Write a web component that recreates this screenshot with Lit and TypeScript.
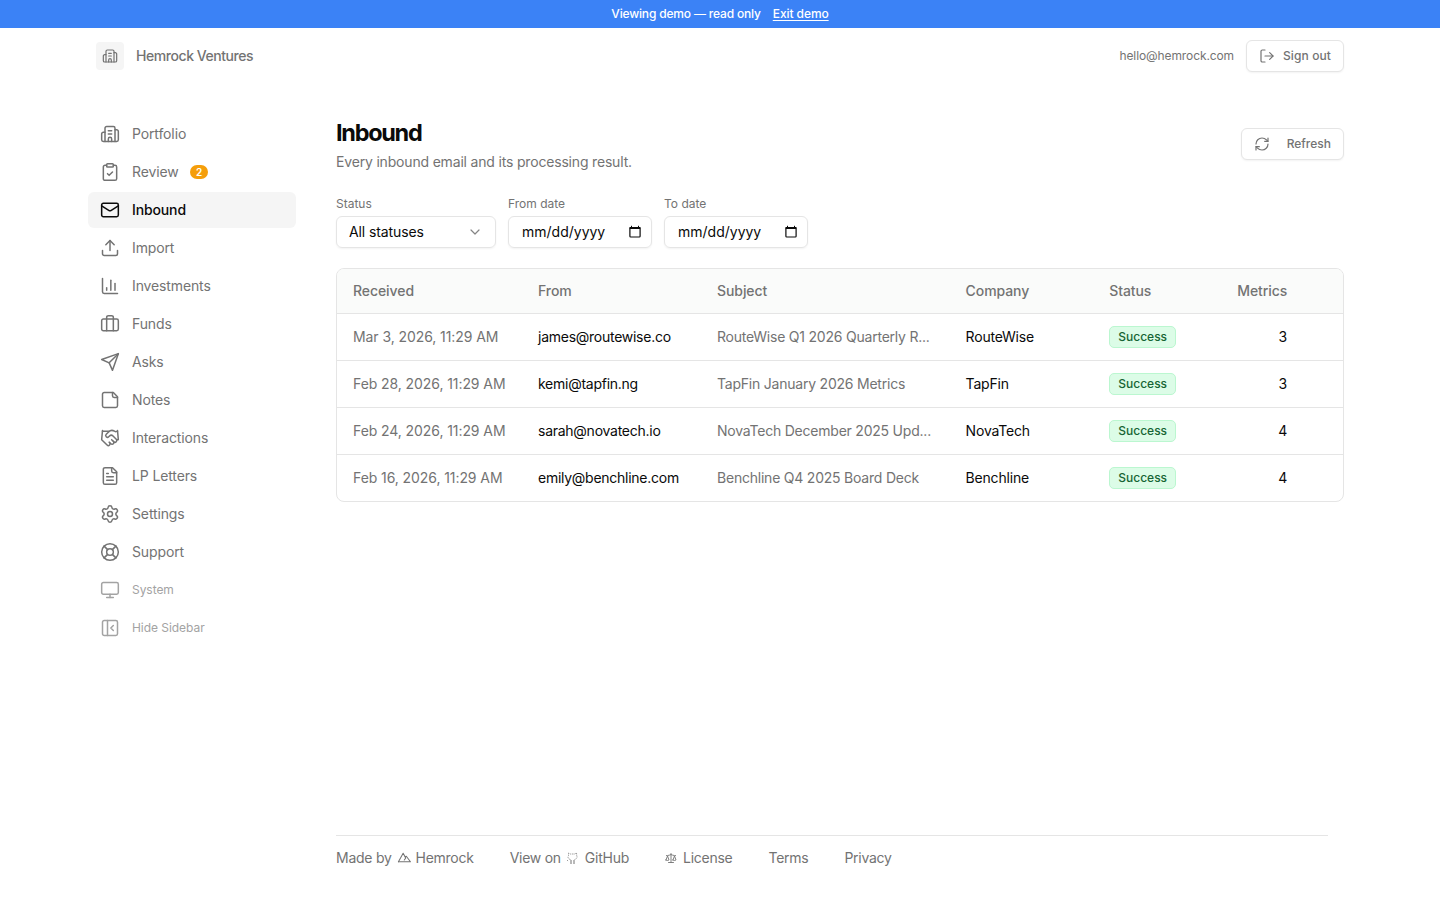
import { LitElement, html, css, svg } from "lit";
import { customElement } from "lit/decorators.js";

const ICONS: Record<string, any> = {
  building: svg`<path d="M10 12h4"/><path d="M10 8h4"/><path d="M14 21v-3a2 2 0 0 0-4 0v3"/><path d="M6 10H4a2 2 0 0 0-2 2v7a2 2 0 0 0 2 2h16a2 2 0 0 0 2-2V9a2 2 0 0 0-2-2h-2"/><path d="M6 21V5a2 2 0 0 1 2-2h8a2 2 0 0 1 2 2v16"/>`,
  review: svg`<rect width="8" height="4" x="8" y="2" rx="1" ry="1"/><path d="M16 4h2a2 2 0 0 1 2 2v14a2 2 0 0 1-2 2H6a2 2 0 0 1-2-2V6a2 2 0 0 1 2-2h2"/><path d="m9 14 2 2 4-4"/>`,
  mail: svg`<rect width="20" height="16" x="2" y="4" rx="2"/><path d="m22 7-8.97 5.7a1.94 1.94 0 0 1-2.06 0L2 7"/>`,
  upload: svg`<path d="M12 3v12"/><path d="m17 8-5-5-5 5"/><path d="M21 15v4a2 2 0 0 1-2 2H5a2 2 0 0 1-2-2v-4"/>`,
  chart: svg`<path d="M3 3v16a2 2 0 0 0 2 2h16"/><path d="M18 17V9"/><path d="M13 17V5"/><path d="M8 17v-3"/>`,
  funds: svg`<path d="M16 20V4a2 2 0 0 0-2-2h-4a2 2 0 0 0-2 2v16"/><rect width="20" height="14" x="2" y="6" rx="2"/>`,
  asks: svg`<path d="m22 2-7 20-4-9-9-4Z"/><path d="M22 2 11 13"/>`,
  note: svg`<path d="M16 3H5a2 2 0 0 0-2 2v14a2 2 0 0 0 2 2h14a2 2 0 0 0 2-2V8Z"/><path d="M15 3v4a2 2 0 0 0 2 2h4"/>`,
  handshake: svg`<path d="m11 17 2 2a1 1 0 1 0 3-3"/><path d="m14 14 2.5 2.5a1 1 0 1 0 3-3l-3.88-3.88a3 3 0 0 0-4.24 0l-.88.88a1 1 0 1 1-3-3l2.81-2.81a5.79 5.79 0 0 1 7.06-.87l.47.28a2 2 0 0 0 1.42.25L21 4"/><path d="m21 3 1 11h-2"/><path d="M3 3 2 14l6.5 6.5a1 1 0 1 0 3-3"/><path d="M3 4h8"/>`,
  file: svg`<path d="M15 2H6a2 2 0 0 0-2 2v16a2 2 0 0 0 2 2h12a2 2 0 0 0 2-2V7Z"/><path d="M14 2v4a2 2 0 0 0 2 2h4"/><path d="M10 9H8"/><path d="M16 13H8"/><path d="M16 17H8"/>`,
  settings: svg`<path d="M9.671 4.136a2.34 2.34 0 0 1 4.659 0 2.34 2.34 0 0 0 3.319 1.915 2.34 2.34 0 0 1 2.33 4.033 2.34 2.34 0 0 0 0 3.831 2.34 2.34 0 0 1-2.33 4.033 2.34 2.34 0 0 0-3.319 1.915 2.34 2.34 0 0 1-4.659 0 2.34 2.34 0 0 0-3.32-1.915 2.34 2.34 0 0 1-2.33-4.033 2.34 2.34 0 0 0 0-3.831A2.34 2.34 0 0 1 6.35 6.051a2.34 2.34 0 0 0 3.319-1.915"/><circle cx="12" cy="12" r="3"/>`,
  support: svg`<circle cx="12" cy="12" r="10"/><path d="m4.93 4.93 4.24 4.24"/><path d="m14.83 9.17 4.24-4.24"/><path d="m14.83 14.83 4.24 4.24"/><path d="m9.17 14.83-4.24 4.24"/><circle cx="12" cy="12" r="4"/>`,
  monitor: svg`<rect width="20" height="14" x="2" y="3" rx="2"/><path d="M8 21h8"/><path d="M12 17v4"/>`,
  panel: svg`<rect width="18" height="18" x="3" y="3" rx="2"/><path d="M9 3v18"/><path d="m16 15-3-3 3-3"/>`,
  logout: svg`<path d="m16 17 5-5-5-5"/><path d="M21 12H9"/><path d="M9 21H5a2 2 0 0 1-2-2V5a2 2 0 0 1 2-2h4"/>`,
  refresh: svg`<path d="M3 12a9 9 0 0 1 9-9 9.75 9.75 0 0 1 6.74 2.74L21 8"/><path d="M21 3v5h-5"/><path d="M21 12a9 9 0 0 1-9 9 9.75 9.75 0 0 1-6.74-2.74L3 16"/><path d="M8 16H3v5"/>`,
  chevron: svg`<path d="m6 9 6 6 6-6"/>`,
  scale: svg`<path d="m16 16 3-8 3 8c-.87.65-1.92 1-3 1s-2.13-.35-3-1Z"/><path d="m2 16 3-8 3 8c-.87.65-1.92 1-3 1s-2.13-.35-3-1Z"/><path d="M7 21h10"/><path d="M12 3v18"/><path d="M3 7h2c2 0 5-1 7-2 2 1 5 2 7 2h2"/>`,
  mountain: svg`<path d="M2.500 18.500 10.500 4l4.500 8-2.500 3.500"/><path d="m14 10 2-1 7 9.500H2.500"/>`,
};

const icon = (name: string, size: number, width = 1.8) => html`<svg
  width=${size} height=${size} viewBox="0 0 24 24" fill="none" stroke="currentColor"
  stroke-width=${width} stroke-linecap="round" stroke-linejoin="round">${ICONS[name]}</svg>`;

const NAV = [
  ["building", "Portfolio"], ["review", "Review"], ["mail", "Inbound"], ["upload", "Import"],
  ["chart", "Investments"], ["funds", "Funds"], ["asks", "Asks"], ["note", "Notes"],
  ["handshake", "Interactions"], ["file", "LP Letters"], ["settings", "Settings"],
  ["support", "Support"], ["monitor", "System"], ["panel", "Hide Sidebar"],
];

const ROWS = [
  ["Mar 3, 2026, 11:29 AM", "james@routewise.co", "RouteWise Q1 2026 Quarterly R...", "RouteWise", "3"],
  ["Feb 28, 2026, 11:29 AM", "kemi@tapfin.ng", "TapFin January 2026 Metrics", "TapFin", "3"],
  ["Feb 24, 2026, 11:29 AM", "sarah@novatech.io", "NovaTech December 2025 Upd...", "NovaTech", "4"],
  ["Feb 16, 2026, 11:29 AM", "emily@benchline.com", "Benchline Q4 2025 Board Deck", "Benchline", "4"],
];

@customElement("app-root")
export class AppRoot extends LitElement {
  static styles = css`
    :host { display: flex; flex-direction: column; height: 900px; overflow: hidden; background: #fff; color: #0a0a0a;
      font: 400 14px/20px Inter, sans-serif; }
    * { box-sizing: border-box; }
    svg { display: block; flex: none; }
    h1, p { margin: 0; }
    .banner { height: 28px; flex: none; display: flex; align-items: center; justify-content: center; gap: 12px;
      background: #3b82f6; color: #fff; font-size: 12px; line-height: 16px; font-weight: 500; letter-spacing: -0.17px; }
    .banner a { text-decoration: underline; text-underline-offset: 2px; letter-spacing: -0.08px; }
    header { height: 56px; flex: none; display: flex; align-items: center; justify-content: space-between; padding: 0 96px; color: #737373; }
    .brand { display: flex; align-items: center; gap: 12px; font-weight: 500; letter-spacing: -0.44px; }
    .logo { width: 28px; height: 28px; border-radius: 4px; background: #f5f5f5; display: grid; place-items: center; }
    .account { display: flex; align-items: center; gap: 12px; font-size: 12px; letter-spacing: -0.1px; }
    .btn { height: 32px; display: flex; align-items: center; gap: 8px; padding: 0 12px; border: 1px solid #e5e5e5; letter-spacing: 0.1px;
      border-radius: 6px; font: 500 12px/16px Inter, sans-serif; color: #737373; background: #fff; box-shadow: 0 1px 2px rgba(0,0,0,.05); }
    .btn.wide { gap: 16.600px; letter-spacing: 0; }
    .body { flex: 1; display: flex; padding: 0 96px 0 88px; min-height: 0; }
    nav { width: 208px; flex: none; margin-right: 40px; padding-top: 32px; display: flex; flex-direction: column; gap: 2px; letter-spacing: -0.13px; }
    .item { height: 36px; border-radius: 6px; display: flex; align-items: center; gap: 12px; padding: 0 12px; color: #737373; }
    .item.active { background: #f5f5f5; color: #0a0a0a; font-weight: 500; }
    .item.minor { font-size: 12px; color: #a3a3a3; letter-spacing: -0.05px; }
    .count { height: 14px; width: 18px; margin-left: -0.600px; border-radius: 7px; background: #f59e0b; color: #fff; font-size: 10px; line-height: 14px;
      font-weight: 600; text-align: center; }
    main { flex: 1; display: flex; flex-direction: column; padding-top: 32px; min-width: 0; }
    .title { display: flex; justify-content: space-between; align-items: center; height: 56px; }
    h1 { font-size: 23.500px; line-height: 32px; font-weight: 650; letter-spacing: -1.3px; }
    .sub { margin-top: 3px; color: #737373; letter-spacing: -0.18px; }
    .filters { display: flex; gap: 12px; margin-top: 24px; }
    .filter { display: flex; flex-direction: column; gap: 4px; width: 144px; color: #737373; font-size: 12px; line-height: 16px; }
    .filter.status { width: 160px; }
    .field { height: 32px; border: 1px solid #e5e5e5; border-radius: 6px; padding: 0 12px; display: flex; align-items: center;
      justify-content: space-between; color: #0a0a0a; font-size: 14px; line-height: 20px; letter-spacing: -0.1px; box-shadow: 0 1px 2px rgba(0,0,0,.05); }
    .field.date { padding: 0 10px 0 13px; }
    .date span { letter-spacing: 0; }
    .date svg { margin-bottom: 2px; }
    .chev { color: #858585; }
    .table { margin-top: 20px; border: 1px solid #e5e5e5; border-radius: 8px; overflow: hidden; }
    .row { display: grid; grid-template-columns: 185px 179px 248.600px 143.600px 112px 66px; height: 47px; align-items: center;
      padding-left: 16px; border-top: 1px solid #e5e5e5; letter-spacing: -0.08px; }
    .row.head { height: 44px; border-top: 0; background: #fafbfa; color: #737373; font-weight: 500; }
    .muted { color: #737373; }
    .from { letter-spacing: -0.26px; }
    .company { letter-spacing: -0.19px; }
    .subject { white-space: nowrap; letter-spacing: -0.22px; }
    .num { text-align: right; }
    .badge { display: block; width: 67px; height: 22px; text-align: center; border: 1px solid #bbf7d0; border-radius: 5px; background: #dcfce7;
      color: #166534; font-size: 12px; line-height: 20px; font-weight: 500; letter-spacing: 0; }
    footer { margin: auto 16px 0 0; height: 65px; border-top: 1px solid #e5e5e5; padding-top: 12px; display: flex; gap: 36px; color: #737373; letter-spacing: -0.26px; }
    .link { display: flex; align-items: center; gap: 6px; height: 20px; }
    .link.made, .link.git { gap: 5px; }
  `;

  render() {
    return html`
      <div class="banner"><span>Viewing demo — read only</span><a>Exit demo</a></div>
      <header>
        <div class="brand"><span class="logo">${icon("building", 16)}</span>Hemrock Ventures</div>
        <div class="account">hello@hemrock.com<button class="btn">${icon("logout", 16)}Sign out</button></div>
      </header>
      <div class="body">
        <nav>
          ${NAV.map(([glyph, label], i) => html`<div class="item ${label === "Inbound" ? "active" : ""} ${i > 11 ? "minor" : ""}">
            ${icon(glyph, 20)}<span>${label}</span>${label === "Review" ? html`<span class="count">2</span>` : ""}</div>`)}
        </nav>
        <main>
          <div class="title">
            <div><h1>Inbound</h1><p class="sub">Every inbound email and its processing result.</p></div>
            <button class="btn wide">${icon("refresh", 16)}Refresh</button>
          </div>
          <div class="filters">
            <div class="filter status">Status<div class="field">All statuses<span class="chev">${icon("chevron", 16)}</span></div></div>
            ${["From date", "To date"].map((l) => html`<div class="filter">${l}
              <div class="field date"><span>mm/dd/yyyy</span>
                <svg width="12" height="13" viewBox="0 0 12 13" fill="none" stroke="#0a0a0a"><rect stroke-width="1.200" x=".9" y="2.600" width="10.200" height="9.400" rx=".8"/><path stroke-width="2" d="M.7 3h10.600"/><path d="M2.500 .8v2M9.500 .8v2"/></svg>
              </div></div>`)}
          </div>
          <div class="table">
            <div class="row head"><span>Received</span><span>From</span><span>Subject</span><span>Company</span><span>Status</span><span class="num">Metrics</span></div>
            ${ROWS.map((r) => html`<div class="row"><span class="muted">${r[0]}</span><span class="from">${r[1]}</span><span class="muted subject">${r[2]}</span><span class="company">${r[3]}</span><span><span class="badge">Success</span></span><span class="num">${r[4]}</span></div>`)}
          </div>
          <footer>
            <span class="link made">Made by ${icon("mountain", 14)} Hemrock</span>
            <span class="link git">View on <svg width="14" height="14" viewBox="0 0 14 14" fill="none" stroke="currentColor" stroke-width=".7"><path stroke-dasharray="1.500 .8" d="M4.500 8.500C2 8 1.500 6 2.500 4.500L2.500 2l2 1h4l2-1 .2 2.500C11.500 6 11 8 8.500 8.500M1 9l1.500 1.500"/><path stroke-width="1" d="M5 9v4M8 9v4"/></svg> GitHub</span>
            <span class="link">${icon("scale", 12)} License</span>
            <span class="link">Terms</span>
            <span class="link">Privacy</span>
          </footer>
        </main>
      </div>`;
  }
}
